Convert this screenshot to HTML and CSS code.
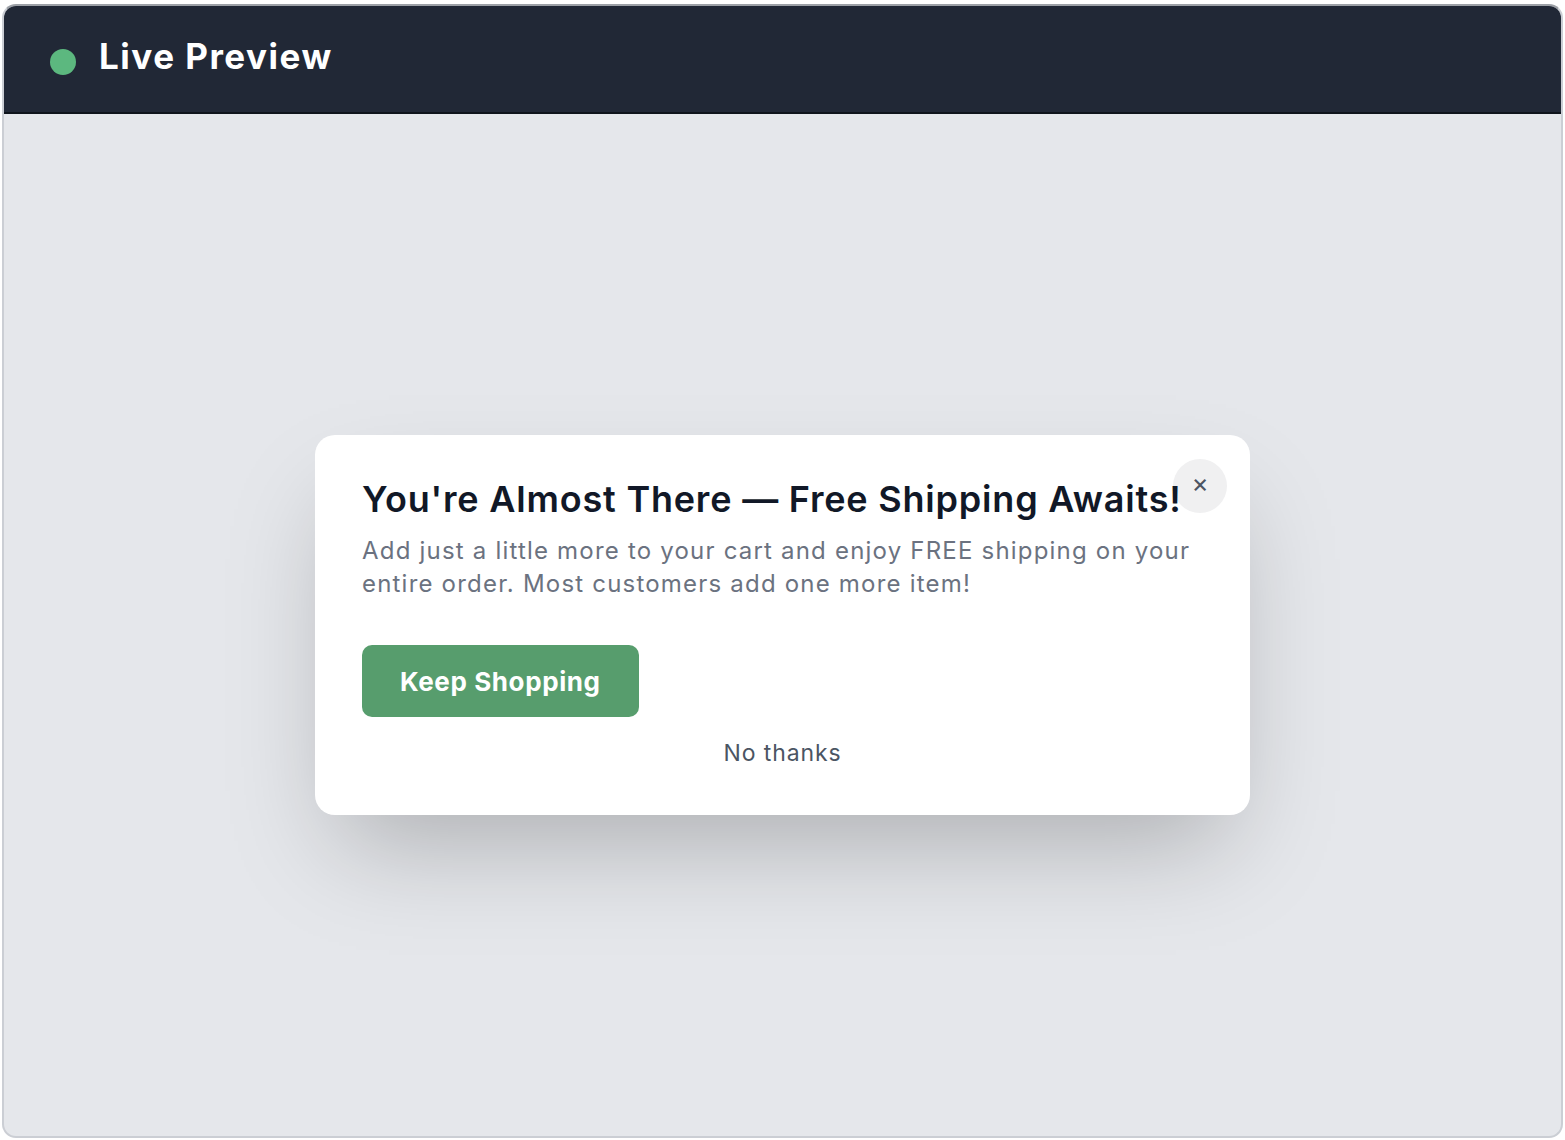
FILE: index.html
```html
<!DOCTYPE html>
<html lang="en">
<head>
<meta charset="utf-8">
<title>Live Preview</title>
<link rel="stylesheet" href="styles.css">
</head>
<body>
  <div class="frame">
    <header class="bar">
      <span class="dot"></span>
      <span class="bar-title">Live Preview</span>
    </header>
    <main class="stage">
      <div class="modal">
        <button class="close" aria-label="Close">×</button>
        <h2 class="modal-title">You're Almost There — Free Shipping Awaits!</h2>
        <p class="modal-text">Add just a little more to your cart and enjoy FREE shipping on your entire order. Most customers add one more item!</p>
        <div class="actions">
          <button class="cta">Keep Shopping</button>
        </div>
        <div class="decline">No thanks</div>
      </div>
    </main>
  </div>
</body>
</html>
```

FILE: styles.css
```css
* { box-sizing: border-box; }
html, body { height: 100%; }
body {
  margin: 0;
  padding: 4px 2px 2px 2px;
  background: #ffffff;
  font-family: Inter, "Noto Sans", "Liberation Sans", sans-serif;
}
.frame {
  height: 100%;
  display: flex;
  flex-direction: column;
  border: 2px solid #cbced4;
  border-top-color: #9ca0a6;
  border-radius: 14px;
  overflow: hidden;
  background: #e5e7eb;
}
.bar {
  height: 108px;
  flex: none;
  background: #212836;
  border-bottom: 2px solid #0f141c;
  display: flex;
  align-items: center;
  padding-left: 46px;
  gap: 23px;
}
.dot {
  width: 26px;
  height: 26px;
  border-radius: 50%;
  background: #5cb87f;
  margin-top: 6px;
}
.bar-title {
  color: #ffffff;
  font-weight: 700;
  font-size: 35px;
  letter-spacing: 1.5px;
  margin-bottom: 6px;
}
.stage {
  flex: 1;
  display: flex;
  align-items: center;
  justify-content: center;
}
.modal {
  position: relative;
  width: 935px;
  background: #ffffff;
  border-radius: 20px;
  padding: 41px 47px 46px 47px;
  box-shadow: 0 50px 100px -24px rgba(0,0,0,0.25);
}
.close {
  position: absolute;
  z-index: 0;
  top: 24px;
  right: 23px;
  width: 54px;
  height: 54px;
  border-radius: 50%;
  border: none;
  background: #f0f0f1;
  color: #4b5563;
  font-family: Inter, "Liberation Sans", sans-serif;
  font-size: 26px;
  line-height: 1;
  padding: 0 0 6px 0;
  display: flex;
  align-items: center;
  justify-content: center;
}
.modal-title {
  position: relative;
  z-index: 1;
  margin: 0;
  font-size: 36px;
  font-weight: 600;
  color: #111827;
  line-height: 1.3;
  letter-spacing: 0.8px;
  white-space: nowrap;
}
.modal-text {
  margin: 12px 0 0 0;
  font-size: 24px;
  line-height: 33px;
  color: #6b7280;
  letter-spacing: 1.2px;
}
.actions {
  margin-top: 45px;
  display: flex;
}
.cta {
  height: 72px;
  padding: 0 38px;
  border: none;
  border-radius: 10px;
  background: #579d6d;
  color: #ffffff;
  font-family: Inter, "Liberation Sans", sans-serif;
  font-size: 26px;
  font-weight: 700;
  letter-spacing: 0.6px;
}
.decline {
  margin-top: 20px;
  text-align: center;
  font-size: 23px;
  color: #4b5563;
  line-height: 32px;
  letter-spacing: 0.9px;
}
```
